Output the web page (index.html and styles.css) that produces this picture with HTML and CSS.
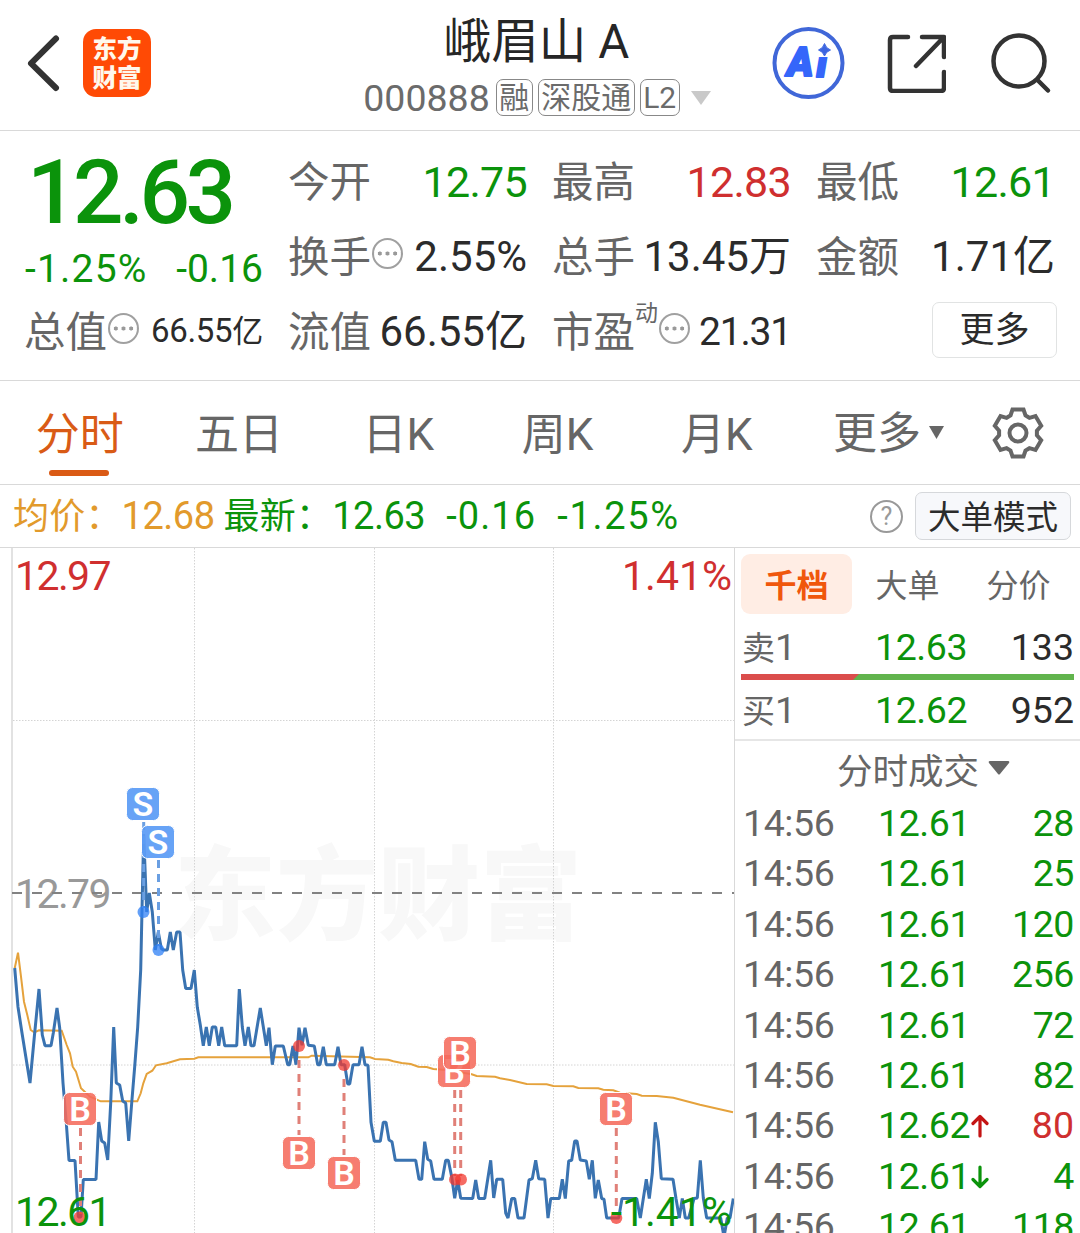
FILE: index.html
```
<!DOCTYPE html>
<html lang="zh-CN">
<head>
    <meta charset="UTF-8">
    <meta name="viewport" content="width=device-width, initial-scale=1.0">
    <title>峨眉山A 000888</title>
    <link rel="stylesheet" href="styles.css">
</head>
<body>

    <header class="header">
        <div class="header-left">
            <svg class="back" width="36" height="60" viewBox="0 0 36 60"><path d="M31 5.5 L6 30.3 L31 55" /></svg>
            <div class="logo"><span>东方</span><span>财富</span></div>
        </div>
        <div class="header-title">
            <h1>峨眉山 A</h1>
            <div class="code-row">
                <span class="code">000888</span>
                <span class="badge">融</span>
                <span class="badge">深股通</span>
                <span class="badge">L2</span>
                <svg class="code-arrow" width="22" height="14" viewBox="0 0 22 14"><path d="M1 0 H21 L11 14 Z" /></svg>
            </div>
        </div>
        <div class="header-right">
            <svg width="74" height="74" viewBox="0 0 74 74">
                <text class="ai-text" x="15" y="50">A</text>
                <text class="ai-text" x="44.5" y="51">i</text>
                <rect x="44" y="14" width="18" height="17" fill="#fff" />
                <path d="M52.500 17.500 Q54 22.500 58.500 24 Q54 25.500 52.500 30 Q51 25.500 46.500 24 Q51 22.500 52.500 17.500 Z" fill="#3d66e0" stroke="#3d66e0" />
                <circle cx="36.500" cy="37" r="34" fill="none" stroke="#4067d8" stroke-width="4" />
            </svg>
            <svg class="icon-line" width="60" height="60" viewBox="0 0 60 60">
                <path d="M22 4 H7 Q4 4 4 7 V55 Q4 58 7 58 H55 Q58 58 58 55 V39" />
                <path d="M36 4 H58 V24 M57 5 L30 33" />
            </svg>
            <svg class="icon-line" width="62" height="62" viewBox="0 0 62 62">
                <circle cx="29" cy="29" r="25.5" />
                <path d="M47.500 48 L58 58.500" />
            </svg>
        </div>
    </header>

    <section class="quote">
        <div class="price-box">
            <div class="price green">12.63</div>
            <div class="change green"><span>-1.25%</span><span>-0.16</span></div>
        </div>
        <div class="cell"><label>今开</label><b class="green">12.75</b></div>
        <div class="cell"><label>最高</label><b class="red">12.83</b></div>
        <div class="cell"><label>最低</label><b class="green">12.61</b></div>
        <div class="cell"><label>换手</label><i class="dots"></i><b class="mid">2.55%</b></div>
        <div class="cell"><label>总手</label><b class="mid">13.45<em>万</em></b></div>
        <div class="cell"><label>金额</label><b class="mid">1.71<em>亿</em></b></div>
        <div class="cell"><label>总值</label><i class="dots"></i><b class="small">66.55<em>亿</em></b></div>
        <div class="cell"><label>流值</label><b class="mid">66.55<em>亿</em></b></div>
        <div class="cell"><label>市盈</label><sup>动</sup><i class="dots"></i><b class="pe">21.31</b></div>
        <div class="cell"><button class="more-btn">更多</button></div>
    </section>

    <nav class="tabs">
        <span class="tab active">分时</span>
        <span class="tab">五日</span>
        <span class="tab">日K</span>
        <span class="tab">周K</span>
        <span class="tab">月K</span>
        <span class="tab tab-more">更多<svg width="15" height="13" viewBox="0 0 15 13"><path d="M0 0 H15 L7.500 13 Z" /></svg></span>
        <svg class="gear" width="54" height="54" viewBox="-27 -27 54 54">
            <path d="M-7.500 -17.500 L-5.500 -23.500 H5.500 L7.500 -17.500 L11.400 -15.200 L17.500 -17 L23.200 -7.200 L18.900 -2.200 V2.200 L23.200 7.200 L17.500 17 L11.400 15.200 L7.500 17.500 L5.500 23.500 H-5.500 L-7.500 17.500 L-11.400 15.200 L-17.500 17 L-23.200 7.200 L-18.900 2.200 V-2.200 L-23.200 -7.200 L-17.500 -17 L-11.400 -15.200 Z" />
            <circle r="8.500" />
        </svg>
    </nav>

    <div class="info-bar">
        <span class="avg"><em>均价：</em>12.68</span>
        <span class="last green"><em>最新：</em>12.63</span>
        <span class="diff green">-0.16</span>
        <span class="diff green">-1.25%</span>
        <span class="help">?</span>
        <button class="mode-btn">大单模式</button>
    </div>

    <main class="main">
        <svg class="chart" width="735" height="685" viewBox="0 548 735 685">
            <text class="watermark" x="174" y="932">东方财富</text>

            <!-- grid -->
            <path class="edge" d="M12 548 V1233" />
            <path class="grid" d="M194.500 548 V1233 M374.500 548 V1233 M553.500 548 V1233 M13 720.500 H734 M13 1065 H734" />
            <text class="axis gray" x="15" y="908">12.79</text>
            <path class="middle" d="M12 893 H734" />

            <!-- average price -->
            <polyline class="avg-line" points="14.7,968.300 18,952.700 21,976.700 24,1001.700 27.300,1015 30.700,1030 34.300,1032.300 39,1030.300 61.700,1030.700 66.700,1045 70,1053.300 72.700,1066.700 76,1071.700 81,1088.300 90,1096.700 100.700,1101.300 137.300,1101.300 140.700,1093.300 143.300,1083.300 146.700,1074 152.300,1070.700 156,1065.300 166.700,1063.300 180,1059.300 194.300,1058.700 198.300,1057.300 308.300,1057.300 311.700,1055.700 370,1057.300 375,1059 388.300,1059.700 393.300,1061.300 401.700,1063 410.700,1064 418.300,1066.700 426.700,1067 433.300,1069 446.700,1070 471.700,1074.300 476.700,1076 495,1076.700 500,1078.300 510,1080 526.700,1084 546.700,1084.300 553.300,1086 573.300,1086.300 578.300,1088 598.300,1088.300 603.300,1089.700 613.300,1090.300 620,1092.700 636.700,1094 641.700,1095.700 656.700,1096 673.300,1097.700 700,1104.700 733,1112.300" />

            <!-- price -->
            <polyline class="price-line" points="14.7,968 18,1007 22,1033 30,1083 34.300,1037 39,989 42.300,1035 45,1045.700 51,1045.700 53.300,1033 57,1008 59.700,1028 63,1083 66.300,1123 69,1160.500 75,1160.500 78.300,1217 81,1217 83.300,1179.500 96,1179.500 98.700,1122 101.700,1141 104.700,1143 107.700,1160 110.700,1103 113.700,1027 116.300,1083 119.700,1085 122.700,1101 125.700,1103 128.700,1141 131.700,1103 134.700,1066.700 137.700,1027 140.700,970 142,910 143.700,834 146.700,912 149.300,893 152.300,912 155.300,950 158.300,932 161.300,948.500 163.300,950 167.300,950 170.300,932 173.300,950 176.700,932 180,932 182.700,970 185.700,988.500 191,988.500 194.300,970 197.300,1007.300 200.300,1025 203.300,1045.700 206.300,1027 209.300,1045.700 212.300,1027 215.700,1027 218.700,1045.700 221.700,1027 224.700,1045.700 236.700,1045.700 239.300,989 242.300,1027 245,1045.700 248.300,1027 251,1045.700 254,1045.700 260.300,1008 266.300,1045.700 269,1027.700 272.300,1064.700 275.300,1046 283.300,1046 287.700,1064.700 289.700,1064.700 293,1046 296,1064.700 299,1027.700 302,1045.300 305,1027.700 308.300,1045.300 314.300,1046 317.700,1064.700 320,1064.700 323.300,1046.700 326.300,1064.700 334.700,1064.700 338,1046.700 341,1064.700 344.700,1064.700 347.700,1084 349.700,1084 353,1064.700 359,1064.700 362,1046.700 365,1064.700 368,1065.300 371,1122.300 374.300,1141.300 380.300,1141.300 383.300,1122.300 386,1122.300 389,1140 392,1141.700 395.300,1160.300 415.700,1160.300 419,1179.300 421.700,1179.300 424.700,1141.700 427.700,1159.300 430.700,1161 434,1179.300 442.300,1179.300 445.700,1160.300 448.300,1160.300 451.700,1176.700 454.700,1198.300 457.700,1180 460.700,1198.300 472.700,1198.600 475.700,1180 478.700,1198.600 484.700,1198.600 490.700,1160.300 493.700,1198 496.700,1179.300 502.700,1179.300 505.700,1213 508,1218 511.700,1198.600 514.700,1198.600 518,1218 524,1218 529,1180 532.300,1178.700 535.700,1160.300 538.700,1178.700 544.700,1179.300 548,1218 550.700,1198.600 559.300,1198.600 562.300,1179.300 565.300,1198.600 568.700,1161 571.700,1160.300 574.700,1141 577,1141 580.300,1160 586.300,1161 589.300,1179.300 592.300,1160.300 595.300,1198.300 598.300,1180 601.700,1198.600 604,1199.300 606.700,1218 618.700,1218 622,1198.600 636.700,1198.600 640.300,1218 646.300,1179.300 649.300,1198.600 652.300,1173.300 655.300,1122.300 658.300,1141.700 661.300,1178.700 673,1179.300 676,1198.600 679.300,1218 682.300,1198.600 685.300,1218 688.700,1218 694,1198.600 697.300,1198 700.300,1160.300 703.300,1198 706.700,1218 720.700,1218 724,1237 727.300,1218 730,1218 733.300,1198.600" />

            <!-- sell marks -->
            <g class="mark sell">
                <path d="M143.700 822 V908 M158.500 860 V946" />
                <circle cx="143.500" cy="912" r="6" /><circle cx="158.500" cy="950" r="6" />
                <rect x="126.500" y="787.500" width="33" height="33" rx="6" /><text x="143" y="816">S</text>
                <rect x="141.500" y="825.500" width="33" height="33" rx="6" /><text x="158" y="854">S</text>
            </g>

            <!-- buy marks -->
            <g class="mark buy">
                <path d="M80.500 1128 V1214 M299 1060 V1135 M344 1079 V1155 M454.700 1090 V1176 M460.700 1090 V1176 M616.300 1128 V1214" />
                <circle cx="79.500" cy="1217.500" r="6" /><circle cx="299" cy="1046" r="6" /><circle cx="344" cy="1065" r="6" />
                <circle cx="455" cy="1179.500" r="6" /><circle cx="461" cy="1179.500" r="6" /><circle cx="616.300" cy="1218" r="6" />
                <rect x="63.500" y="1092.500" width="33" height="33" rx="6" /><text x="80" y="1121">B</text>
                <rect x="282.500" y="1136.500" width="33" height="33" rx="6" /><text x="299" y="1165">B</text>
                <rect x="327.500" y="1156.500" width="33" height="33" rx="6" /><text x="344" y="1185">B</text>
                <rect x="437.500" y="1054.500" width="33" height="33" rx="6" /><text x="454" y="1083">B</text>
                <rect x="443.500" y="1036.500" width="33" height="33" rx="6" /><text x="460" y="1065">B</text>
                <rect x="599.500" y="1092.500" width="33" height="33" rx="6" /><text x="616" y="1121">B</text>
            </g>

            <text class="axis up" x="15" y="590">12.97</text>
            <text class="axis up end" x="732" y="590">1.41%</text>
            <text class="axis down" x="15" y="1226">12.61</text>
            <text class="axis down end" x="732" y="1226">-1.41%</text>
        </svg>

        <aside class="side">
            <div class="side-tabs">
                <span class="side-tab on">千档</span>
                <span class="side-tab">大单</span>
                <span class="side-tab">分价</span>
            </div>
            <div class="order"><span class="name"><em>卖</em>1</span><span class="green">12.63</span><span class="qty">133</span></div>
            <div class="ratio"><div class="ratio-sell"></div></div>
            <div class="order buy-order"><span class="name"><em>买</em>1</span><span class="green">12.62</span><span class="qty">952</span></div>
            <div class="deal-title">分时成交<svg width="22" height="14" viewBox="0 0 22 14"><path d="M2 0 H20 Q22 0 21 2 L12 13 Q11 14 10 13 L1 2 Q0 0 2 0 Z" /></svg></div>
            <div class="deals">
                <div class="deal"><span>14:56</span><span class="green">12.61</span><span class="vol green">28</span></div>
                <div class="deal"><span>14:56</span><span class="green">12.61</span><span class="vol green">25</span></div>
                <div class="deal"><span>14:56</span><span class="green">12.61</span><span class="vol green">120</span></div>
                <div class="deal"><span>14:56</span><span class="green">12.61</span><span class="vol green">256</span></div>
                <div class="deal"><span>14:56</span><span class="green">12.61</span><span class="vol green">72</span></div>
                <div class="deal"><span>14:56</span><span class="green">12.61</span><span class="vol green">82</span></div>
                <div class="deal"><span>14:56</span><span class="green">12.62<svg class="arrow up" width="18" height="24" viewBox="0 0 18 24"><path d="M9 22 V3 M2 9.500 L9 2.500 L16 9.500" /></svg></span><span class="vol red">80</span></div>
                <div class="deal"><span>14:56</span><span class="green">12.61<svg class="arrow down" width="18" height="24" viewBox="0 0 18 24"><path d="M9 2 V21 M2 14.500 L9 21.500 L16 14.500" /></svg></span><span class="vol green">4</span></div>
                <div class="deal"><span>14:56</span><span class="green">12.61</span><span class="vol green">118</span></div>
            </div>
        </aside>
    </main>

</body>
</html>
```
FILE: styles.css
```
* {
    box-sizing: border-box;
    margin: 0;
    padding: 0;
}

body {
    width: 1080px;
    height: 1233px;
    overflow: hidden;
    background: #fff;
    color: #2b2b2b;
    font-family: Roboto, "Noto Sans CJK SC", sans-serif;
}

em, i, b, label {
    font-style: normal;
    font-weight: 400;
}

svg { flex: none; }

button {
    font-family: inherit;
    color: #2b2b2b;
}

.green { color: #0b930b; }
.red { color: #cf2f2f; }

/* header */
.header {
    height: 131px;
    border-bottom: 1px solid #d9d9d9;
    display: grid;
    grid-template-columns: 301px 1fr 308px;
}

.header-left {
    display: flex;
    align-items: center;
    padding: 0 0 4px 25px;
}

.back {
    fill: none;
    stroke: #333;
    stroke-width: 6;
    stroke-linecap: round;
    stroke-linejoin: round;
}

.logo {
    width: 68px;
    height: 68px;
    margin-left: 22px;
    border-radius: 13px;
    background: #ff4a05;
    color: #fff8ec;
    display: flex;
    flex-direction: column;
    align-items: center;
    justify-content: center;
    font-size: 24.5px;
    font-weight: 900;
    line-height: 29px;
    padding-top: 2px;
}

.header-title {
    display: flex;
    flex-direction: column;
    align-items: center;
    padding-top: 15px;
}

.header-title h1 {
    font-size: 47.5px;
    font-weight: 400;
    line-height: 55px;
    color: #262626;
}

.code-row {
    display: flex;
    align-items: center;
    height: 55px;
    gap: 5px;
    color: #6b6b6b;
    padding-left: 2px;
}

.code {
    font-size: 37.5px;
    margin-right: 1px;
}

.badge {
    height: 37px;
    padding: 0 2.5px;
    border: 1.5px solid #888;
    border-radius: 7px;
    font-size: 30px;
    line-height: 35px;
}

.code-arrow {
    fill: #c9c9c9;
    margin-left: 5px;
}

.header-right {
    display: flex;
    align-items: center;
    padding-bottom: 4px;
}

.header-right svg + svg { margin-left: 40px; }

.header-right svg:last-child { margin-left: 44px; }

.ai-text {
    font-size: 40px;
    font-weight: 900;
    font-style: italic;
    fill: #3566fa;
    stroke: #3566fa;
    stroke-width: 2;
    stroke-linejoin: round;
}

.icon-line {
    fill: none;
    stroke: #333;
    stroke-width: 4.5;
    stroke-linecap: round;
    stroke-linejoin: round;
}

/* quote */
.quote {
    height: 250px;
    padding: 13px 25px 0;
    border-bottom: 1px solid #d9d9d9;
    display: grid;
    grid-template-columns: repeat(4, 238px);
    grid-auto-rows: 75px;
    column-gap: 26px;
}

.price-box { grid-row: span 2; }

.price {
    font-size: 89px;
    font-weight: 500;
    line-height: 97px;
    letter-spacing: -4.5px;
    padding-left: 2px;
}

.change {
    display: flex;
    justify-content: space-between;
    font-size: 39px;
    line-height: 56px;
}

.change span:first-child { letter-spacing: 1.2px; }

.cell {
    display: flex;
    align-items: center;
    line-height: 60px;
    white-space: nowrap;
}

.cell label {
    font-size: 41.5px;
    line-height: 62px;
    padding-top: 3px;
    margin-left: -1px;
    color: #666;
}

.cell b {
    margin-left: auto;
    font-size: 43px;
    letter-spacing: -0.7px;
}

.cell b.mid { font-size: 42px; letter-spacing: 0; }
.cell b.mid em { font-size: 42px; }
.cell b.small { font-size: 33px; letter-spacing: -0.3px; }
.cell b.small em { font-size: 31px; }
.cell b.pe { font-size: 39px; letter-spacing: -1.2px; }

.cell sup {
    align-self: flex-start;
    font-size: 23px;
    line-height: 40px;
    color: #666;
}

.dots {
    width: 31px;
    height: 31px;
    margin: -6px 0 0 1px;
    border: 2.5px solid #a0a0a0;
    border-radius: 50%;
    background:
        radial-gradient(circle, #999 1.8px, transparent 2.3px) 0 50% / 33.3% 9px repeat-x;
    background-origin: content-box;
    padding: 0 2px;
    flex: none;
}

.more-btn {
    width: 125px;
    height: 56px;
    margin: -3px -2px 0 auto;
    border: 1.5px solid #e1e3e3;
    border-radius: 7px;
    background: #fff;
    font-size: 35px;
    line-height: 52px;
    padding-top: 2px;
}

/* tabs */
.tabs {
    height: 104px;
    border-bottom: 1px solid #d9d9d9;
    display: flex;
    align-items: center;
    font-size: 44px;
    color: #666;
}

.tab {
    width: 159.3px;
    height: 100%;
    line-height: 108px;
    text-align: center;
}

.tab.active {
    position: relative;
    color: #d95b16;
}

.tab.active::after {
    content: "";
    position: absolute;
    left: 49px;
    bottom: 8px;
    width: 60px;
    height: 6px;
    border-radius: 3px;
    background: #da5a15;
}

.tab-more {
    width: 184px;
    padding-top: 2px;
    display: flex;
    align-items: center;
    justify-content: center;
}

.tab-more svg {
    fill: #666;
    margin: -3px 0 0 8px;
}

.gear {
    margin-left: 11px;
    fill: none;
    stroke: #666;
    stroke-width: 4;
}

/* average / latest */
.info-bar {
    height: 63px;
    padding: 0 9px 0 13px;
    border-bottom: 1px solid #d9d9d9;
    display: flex;
    align-items: center;
    font-size: 38px;
    line-height: 62px;
    white-space: nowrap;
}

.info-bar em { font-size: 36px; letter-spacing: 0.2px; }
.avg { color: #e29a2c; letter-spacing: -0.5px; }
.last { margin-left: 9px; letter-spacing: -0.5px; }
.diff { margin-left: 21px; letter-spacing: 1.1px; }
.diff + .diff { letter-spacing: 1.7px; }

.help {
    width: 33px;
    height: 33px;
    margin-left: auto;
    border: 2.5px solid #999;
    border-radius: 50%;
    color: #999;
    font-size: 25px;
    line-height: 29px;
    text-align: center;
}

.mode-btn {
    width: 156px;
    height: 48px;
    margin-left: 12px;
    border: 1px solid #d6d8db;
    border-radius: 7px;
    background: #f7f8fb;
    font-size: 32.5px;
    line-height: 44px;
    padding-top: 3px;
}

/* chart */
.main {
    display: flex;
    height: 685px;
}

.chart { margin-right: -1px; }

.edge {
    stroke: #e2e2e2;
    stroke-width: 2;
}

.grid {
    fill: none;
    stroke: #d4d4d4;
    stroke-width: 1;
    stroke-dasharray: 1.5 1.5;
}

.middle {
    stroke: #828282;
    stroke-width: 2;
    stroke-dasharray: 10 10;
}

.watermark {
    font-size: 102px;
    font-weight: 900;
    fill: #f8f8f8;
}

.axis { font-size: 41px; letter-spacing: -1.6px; }
.axis.gray { fill: #999; }
.axis.up { fill: #d02f2f; }
.axis.down { fill: #0b930b; }
.axis.end { text-anchor: end; letter-spacing: 0; }

.price-line {
    fill: none;
    stroke: #3a73b1;
    stroke-width: 3;
    stroke-linejoin: bevel;
}

.avg-line {
    fill: none;
    stroke: #e5a23c;
    stroke-width: 2;
}

.mark path {
    fill: none;
    stroke-width: 3;
    stroke-dasharray: 8 6;
}

.mark rect {
    stroke: #fff;
    stroke-width: 1;
}

.mark text {
    font-size: 34px;
    font-weight: 600;
    fill: #fff;
    text-anchor: middle;
}

.sell path { stroke: #6a9fe2; }
.sell circle { fill: #2f80f5; fill-opacity: 0.75; }
.sell rect { fill: #5b9cf5; fill-opacity: 0.93; }
.buy path { stroke: #e08078; }
.buy circle { fill: #f23a30; fill-opacity: 0.75; }
.buy rect { fill: #f56b5c; fill-opacity: 0.88; }

/* order book */
.side {
    width: 346px;
    border-left: 1px solid #d9d9d9;
    font-size: 37.5px;
}

.side-tabs {
    display: flex;
    padding: 6px 6px 0;
    font-size: 32px;
    line-height: 64px;
    color: #666;
}

.side-tab {
    width: 111px;
    height: 60px;
    text-align: center;
}

.side-tab.on {
    border-radius: 9px;
    background: #ffede4;
    color: #f0570c;
    font-weight: 700;
}

.order {
    display: grid;
    grid-template-columns: 133px 1fr auto;
    padding: 0 6px 0 7px;
    height: 60px;
    line-height: 66px;
}

.buy-order {
    height: 59px;
    line-height: 61px;
}

.order .green, .deal .green { letter-spacing: -0.4px; }
.order .name { color: #666; }
.order em { font-size: 33px; }

.ratio {
    height: 6px;
    margin: 0 6px;
    background: #61b44d;
}

.ratio-sell {
    width: 118px;
    height: 6px;
    background: #db4d4c;
    clip-path: polygon(0 0, 100% 0, 112px 100%, 0 100%);
}

.deal-title {
    height: 59px;
    border-top: 2px solid #e6e6e6;
    display: flex;
    align-items: center;
    padding: 0 0 3px 102px;
    font-size: 35.5px;
    color: #666;
}

.deal-title svg {
    fill: #666;
    margin: 0 0 0 9px;
}

.deal {
    display: grid;
    grid-template-columns: 135px 1fr auto;
    padding: 0 6px 0 8px;
    height: 50.4px;
    line-height: 50px;
    color: #666;
}

.deal span:first-child { letter-spacing: -0.4px; }
.deal .green { color: #0b930b; }
.deal .red { color: #cf2f2f; }

.arrow {
    fill: none;
    stroke-width: 3.2;
    stroke-linecap: round;
    stroke-linejoin: round;
    margin-left: 1px;
}

.arrow.up { stroke: #c41414; }
.arrow.down { stroke: #0b930b; }
```
